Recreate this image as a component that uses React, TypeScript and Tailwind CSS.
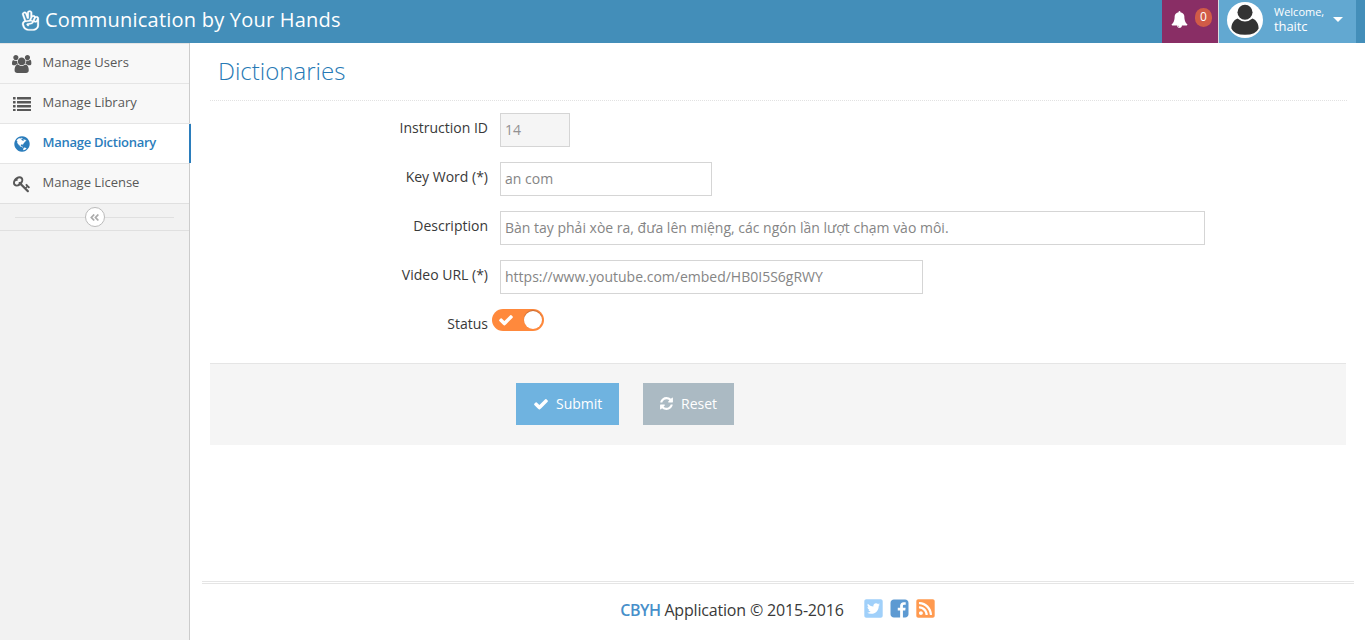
import React from "react";
import { FaTwitterSquare, FaRssSquare, FaAngleDoubleLeft } from "react-icons/fa";
import { LiaHandPeace } from "react-icons/lia";

const paths = {
  users: "M593 896q-162 5-265 128h-134q-82 0-138-40.5t-56-118.5q0-353 124-353 6 0 43.5 21t97.5 42.5 119 21.5q67 0 133-23-5 37-5 66 0 159 90 286zm1071 637q0 120-73 189.5t-194 69.5h-874q-121 0-194-69.5t-73-189.5q0-53 3.5-103.5t14-109 26.5-108.5 43-97.5 62-81 85.5-53.5 111.5-20q10 0 43 21.5t73 48 107 48 135 21.5 135-21.5 107-48 73-48 43-21.5q61 0 111.5 20t85.5 53.5 62 81 43 97.5 26.5 108.5 14 109 3.5 103.5zm-1024-1277q0 106-75 181t-181 75-181-75-75-181 75-181 181-75 181 75 75 181zm704 384q0 159-112.5 271.5t-271.5 112.5-271.5-112.5-112.5-271.5 112.5-271.5 271.5-112.5 271.5 112.5 112.5 271.5zm576 225q0 78-56 118.5t-138 40.5h-134q-103-123-265-128 90-127 90-286 0-29-5-66 66 23 133 23 59 0 119-21.5t97.5-42.5 43.5-21q124 0 124 353zm-128-609q0 106-75 181t-181 75-181-75-75-181 75-181 181-75 181 75 75 181z",
  key: "M832 512q0-80-56-136t-136-56-136 56-56 136q0 42 19 83-41-19-83-19-80 0-136 56t-56 136 56 136 136 56 136-56 56-136q0-42-19-83 41 19 83 19 80 0 136-56t56-136zm851 704q0 17-49 66t-66 49q-9 0-28.5-16t-36.5-33-38.5-40-24.5-26l-96 96 220 220q28 28 28 68 0 42-39 81t-81 39q-40 0-68-28l-671-671q-176 131-365 131-163 0-265.5-102.5t-102.5-265.5q0-160 95-313t248-248 313-95q163 0 265.5 102.5t102.5 265.5q0 189-131 365l355 355 96-96q-3-3-26-24.5t-40-38.5-33-36.5-16-28.5q0-17 49-66t66-49q13 0 23 10 6 6 46 44.5t82 79.5 86.5 86 73 78 28.5 41z",
  refresh: "M1639 1056q0 5-1 7-64 268-268 434.5t-478 166.5q-146 0-282.5-55t-243.5-157l-129 129q-19 19-45 19t-45-19-19-45v-448q0-26 19-45t45-19h448q26 0 45 19t19 45-19 45l-137 137q71 66 161 102t187 36q134 0 250-65t186-179q11-17 53-117 8-23 30-23h192q13 0 22.5 9.5t9.5 22.5zm25-800v448q0 26-19 45t-45 19h-448q-26 0-45-19t-19-45 19-45l138-138q-148-137-349-137-134 0-250 65t-186 179q-11 17-53 117-8 23-30 23h-199q-13 0-22.5-9.5t-9.5-22.5v-7q65-268 270-434.5t480-166.5q146 0 284 55.5t245 156.5l130-129q19-19 45-19t45 19 19 45z",
  check: "M1671 566q0 40-28 68l-724 724-136 136q-28 28-68 28t-68-28l-136-136-362-362q-28-28-28-68t28-68l136-136q28-28 68-28t68 28l294 295 656-657q28-28 68-28t68 28l136 136q28 28 28 68z",
  bell: "M912 1696q0-16-16-16-59 0-101.5-42.5t-42.5-101.5q0-16-16-16t-16 16q0 73 51.5 124.5t124.5 51.5q16 0 16-16zm816-288q0 52-38 90t-90 38h-448q0 106-75 181t-181 75-181-75-75-181h-448q-52 0-90-38t-38-90q50-42 91-88t85-119.5 74.5-158.5 50-206 19.5-260q0-152 117-282.5t307-158.5q-8-19-8-39 0-40 28-68t68-28 68 28 28 68q0 20-8 39 190 28 307 158.5t117 282.5q0 139 19.5 260t50 206 74.5 158.5 85 119.5 91 88z",
  facebook: "M1376 128q119 0 203.5 84.5t84.5 203.5v960q0 119-84.5 203.5t-203.5 84.5h-188v-595h199l30-232h-229v-148q0-56 23.5-84t91.5-28l122-1v-207q-63-9-178-9-136 0-217.5 80t-81.5 226v171h-200v232h200v595h-532q-119 0-203.5-84.5t-84.5-203.5v-960q0-119 84.5-203.5t203.5-84.5h960z",
  globe: "M896 128q209 0 385.5 103t279.5 279.5 103 385.5-103 385.5-279.5 279.5-385.5 103-385.5-103-279.5-279.5-103-385.5 103-385.5 279.5-279.5 385.5-103zm274 521q-2 1-9.5 9.5t-13.5 9.5q2 0 4.5-5t5-11 3.5-7q6-7 22-15 14-6 52-12 34-8 51 11-2-2 9.5-13t14.5-12q3-2 15-4.5t15-7.5l2-22q-12 1-17.5-7t-6.5-21q0 2-6 8 0-7-4.5-8t-11.5 1-9 1q-10-3-15-7.5t-8-16.5-4-15q-2-5-9.5-11t-9.5-10q-1-2-2.5-5.5t-3-6.5-4-5.500-5.500-2.500-7 5-7.500 10-4.500 5q-3-2-6-1.500t-4.500 1-4.500 3-5 3.500q-3 2-8.500 3t-8.500 2q15-5-1-11-10-4-16-3 9-4 7.500-12t-8.500-14h5q-1-4-8.500-8.500t-17.500-8.500-13-6q-8-5-34-9.500t-33-.5q-5 6-4.500 10.500t4 14 3.500 12.500q1 6-5.500 13t-6.500 12q0 7 14 15.500t10 21.500q-3 8-16 16t-16 12q-5 8-1.500 18.500t10.500 16.500q2 2 1.500 4t-3.500 4.500-5.500 4-6.500 3.500l-3 2q-11 5-20.500-6t-13.500-26q-7-25-16-30-23-8-29 1-5-13-41-26-25-9-58-4 6-1 0-15-7-15-19-12 3-6 4-17.500t1-13.500q3-13 12-23 1-1 7-8.500t9.500-13.500.5-6q35 4 50-11 5-5 11.500-17t10.500-17q9-6 14-5.500t14.500 5.500 14.500 5q14 1 15.500-11t-7.500-20q12 1 3-17-4-7-8-9-12-4-27 5-8 4 2 8-1-1-9.500 10.500t-16.500 17.500-16-5q-1-1-5.500-13.500t-9.500-13.500q-8 0-16 15 3-8-11-15t-24-8q19-12-8-27-7-4-20.500-5t-19.500 4q-5 7-5.500 11.500t5 8 10.500 5.500 11.500 4 8.500 3q14 10 8 14-2 1-8.500 3.500t-11.500 4.500-6 4q-3 4 0 14t-2 14q-5-5-9-17.500t-7-16.500q7 9-25 6l-10-1q-4 0-16 2t-20.500 1-13.500-8q-4-8 0-20 1-4 4-2-4-3-11-9.500t-10-8.500q-46 15-94 41 6 1 12-1 5-2 13-6.500t10-5.500q34-14 42-7l5-5q14 16 20 25-7-4-30-1-20 6-22 12 7 12 5 18-4-3-11.500-10t-14.500-11-15-5q-16 0-22 1-146 80-235 222 7 7 12 8 4 1 5 9t2.500 11 11.500-3q9 8 3 19 1-1 44 27 19 17 21 21 3 11-10 18-1-2-9-9t-9-4q-3 5 .5 18.500t10.500 12.500q-7 0-9.500 16t-2.500 35.500-1 23.500l2 1q-3 12 5.500 34.500t21.500 19.500q-13 3 20 43 6 8 8 9 3 2 12 7.500t15 10 10 10.500q4 5 10 22.500t14 23.500q-2 6 9.500 20t10.500 23q-1 0-2.500 1t-2.500 1q3 7 15.500 14t15.500 13q1 3 2 10t3 11 8 2q2-20-24-62-15-25-17-29-3-5-5.500-15.500t-4.500-14.500q2 0 6 1.500t8.500 3.500 7.500 4 2 3q-3 7 2 17.500t12 18.500 17 19 12 13q6 6 14 19.500t0 13.500q9 0 20 10.500t17 19.500q5 8 8 26t5 24q2 7 8.500 13.500t12.500 9.500l16 8 13 7q5 2 18.500 10.500t21.500 11.500q10 4 16 4t14.500-2.500 13.500-3.500q15-2 29 15t21 21q36 19 55 11-2 1 .5 7.500t8 15.500 9 14.500 5.500 8.500q5 6 18 15t18 15q6-4 7-9-3 8 7 20t18 10q14-3 14-32-31 15-49-18 0-1-2.500-5.500t-4-8.500-2.500-8.500 0-7.500 5-3q9 0 10-3.500t-2-12.500-4-13q-1-8-11-20t-12-15q-5 9-16 8t-16-9q0 1-1.500 5.500t-1.500 6.500q-13 0-15-1 1-3 2.500-17.500t3.500-22.500q1-4 5.500-12t7.500-14.500 4-12.500-4.500-9.500-17.500-2.500q-19 1-26 20-1 3-3 10.500t-5 11.500-9 7q-7 3-24 2t-24-5q-13-8-22.500-29t-9.500-37q0-10 2.500-26.500t3-25-5.500-24.500q3-2 9-9.500t10-10.500q2-1 4.500-1.500t4.500 0 4-1.500 3-6q-1-1-4-3-3-3-4-3 7 3 28.500-1.500t27.500 1.500q15 11 22-2 0-1-2.500-9.500t-.5-13.500q5 27 29 9 3 3 15.500 5t17.500 5q3 2 7 5.500t5.500 4.500 5-.5 8.500-6.500q10 14 12 24 11 40 19 44 7 3 11 2t4.500-9.500 0-14-1.500-12.500l-1-8v-18l-1-8q-15-3-18.500-12t1.500-18.500 15-18.500q1-1 8-3.500t15.500-6.500 12.500-8q21-19 15-35 7 0 11-9-1 0-5-3t-7.500-5-4.500-2q9-5 2-16 5-3 7.500-11t7.500-10q9 12 21 2 8-8 1-16 5-7 20.500-10.500t18.500-9.500q7 2 8-2t1-12 3-12q4-5 15-9t13-5l17-11q3-4 0-4 18 2 31-11 10-11-6-20 3-6-3-9.500t-15-5.500q3-1 11.500-.5t10.500-1.500q15-10-7-16-17-5-43 12zm-163 877q206-36 351-189-3-3-12.500-4.500t-12.500-3.500q-18-7-24-8 1-7-2.500-13t-8-9-12.500-8-11-7q-2-2-7-6t-7-5.500-7.500-4.500-8.500-2-10 1l-3 1q-3 1-5.500 2.500t-5.500 3-4 3 0 2.500q-21-17-36-22-5-1-11-5.500t-10.500-7-10-1.500-11.500 7q-5 5-6 15t-2 13q-7-5 0-17.500t2-18.500q-3-6-10.500-4.500t-12 4.500-11.500 8.500-9 6.500-8.500 5.500-8.500 7.500q-3 4-6 12t-5 11q-2-4-11.500-6.500t-9.500-5.500q2 10 4 35t5 38q7 31-12 48-27 25-29 40-4 22 12 26 0 7-8 20.500t-7 21.500q0 6 2 16z",
};

function Glyph({ d, className, box = "0 0 1792 1792" }: { d: string; className: string; box?: string }) {
  return (
    <svg viewBox={box} className={className} fill="currentColor">
      <path d={d} />
    </svg>
  );
}

function ListIcon() {
  return (
    <svg viewBox="0 0 18 14" className="-mt-px h-[14px] w-[18px]" fill="currentColor">
      {[0, 4, 8, 12].map((y) => (
        <g key={y}>
          <rect x="0" y={y} width="2.6" height="2.4" rx="0.3" />
          <rect x="4" y={y} width="14" height="2.4" rx="0.3" />
        </g>
      ))}
    </svg>
  );
}

const items = [
  { label: "Manage Users", icon: <Glyph d={paths.users} box="0 0 1920 1792" className="h-[18px] w-[19.3px]" /> },
  { label: "Manage Library", icon: <ListIcon /> },
  { label: "Manage Dictionary", icon: <Glyph d={paths.globe} className="h-[18px] w-[18px]" />, active: true },
  { label: "Manage License", icon: <Glyph d={paths.key} className="h-[18px] w-[18px]" /> },
];

function Sidebar() {
  return (
    <aside className="w-[190px] shrink-0 border-r border-[#ccc] bg-[#f2f2f2]">
      {items.map(({ label, icon, active }) => (
        <div
          key={label}
          className={
            active
              ? "relative -mr-[2px] flex h-10 items-center border-t border-[#e5e5e5] bg-white text-[13px] font-semibold tracking-[-0.27px] text-[#2b7dbc] shadow-[inset_-2px_0_0_#2b7dbc]"
              : "flex h-10 items-center border-t border-[#e5e5e5] bg-[#f8f8f8] text-[13px] text-[#585858]"
          }
        >
          <span className="ml-[9px] flex w-[26px] justify-center pt-[1px]">{icon}</span>
          <span className="-mt-[2px] ml-[7.5px]">{label}</span>
        </div>
      ))}
      <div className="flex h-[28px] items-center border-y border-[#e0e0e0] px-[15px]">
        <span className="h-px flex-1 bg-[#e0e0e0]" />
        <span className="flex h-5 w-5 items-center justify-center rounded-full border border-[#bbb] bg-white text-[#aaa]">
          <FaAngleDoubleLeft size={11} />
        </span>
        <span className="h-px flex-1 bg-[#e0e0e0]" />
      </div>
    </aside>
  );
}

function Field({ label, value, className }: { label: string; value: string; className: string }) {
  return (
    <div className="mb-[15px] flex h-[34px]">
      <label className="mr-3 w-[278px] pt-[5px] text-right leading-5 text-[#393939]">{label}</label>
      <div className={className}>{value}</div>
    </div>
  );
}

export default function App() {
  return (
    <div className="flex h-[640px] w-[1365px] flex-col overflow-hidden bg-white font-['Open_Sans',sans-serif] text-[14px] text-[#393939]">
      <header className="flex h-[43px] shrink-0 bg-[#438eb9] text-white">
        <div className="flex h-10 items-center pl-[19px] text-[20px]">
          <LiaHandPeace size={23} stroke="currentColor" strokeWidth={0.35} className="scale-x-[1.17]" />
          <span className="ml-[3px] tracking-[0.22px]">Communication by Your Hands</span>
        </div>
        <div className="ml-auto flex w-[57px] border-r border-[#ddd] bg-[#892e65] pl-[9px]">
          <Glyph d={paths.bell} className="mt-[11px] h-[17px] w-[17px]" />
          <span className="mt-2 ml-[7px] flex h-[19px] w-[17px] items-center justify-center rounded-full bg-[#d15b47] pb-px text-[12px]">0</span>
        </div>
        <div className="flex w-[137px] bg-[#62a8d1]">
          <svg viewBox="0 0 36 36" className="mt-[2px] ml-2 h-9 w-9">
            <circle cx="18" cy="18" r="18" fill="#fff" />
            <circle cx="18" cy="10.2" r="7.5" fill="#333" />
            <path fill="#333" d="M10.5 16.5Q18 22.5 25.5 16.5C29.5 18 31.7 22 31.6 26.5Q29 32.8 18 32.8T4.4 26.5C4.3 22 6.5 18 10.5 16.5z" />
          </svg>
          <div className="mt-[5px] ml-[11px] w-[59px] font-medium">
            <div className="text-[11px] leading-[14px]">Welcome,</div>
            <div className="text-[13px] leading-[15px] tracking-[-0.1px]">thaitc</div>
          </div>
          <svg viewBox="0 0 10 5" className="mt-[17px] h-[5px] w-[10px]">
            <path d="M0 0h10L5 5z" fill="#fff" />
          </svg>
        </div>
        <div className="w-[9px]" />
      </header>
      <div className="flex min-h-0 flex-1">
        <Sidebar />
        <main className="flex min-w-0 flex-1 flex-col">
          <h1 className="mr-[18px] ml-5 h-[58px] border-b border-dotted border-[#e2e2e2] pt-[10px] pl-2 text-[24px] leading-9 font-light text-[#2679b5]">Dictionaries</h1>
          <div className="ml-5 pt-3">
            <Field label="Instruction ID" value="14" className="w-[70px] border border-[#d5d5d5] bg-[#f5f5f5] pl-1 leading-8 text-[#939192]" />
            <Field label="Key Word (*)" value="an com" className="w-[212px] border border-[#d5d5d5] pl-1 leading-8 text-[#858585]" />
            <Field label="Description" value="Bàn tay phải xòe ra, đưa lên miệng, các ngón lần lượt chạm vào môi." className="w-[705px] border border-[#d5d5d5] pl-1 leading-8 text-[#858585]" />
            <Field label="Video URL (*)" value="https://www.youtube.com/embed/HB0I5S6gRWY" className="w-[423px] border border-[#d5d5d5] pl-1 leading-8 text-[#858585]" />
            <div className="flex h-[54px]">
              <label className="mr-1 w-[278px] pt-[5px] text-right leading-5">Status</label>
              <div className="flex h-[22px] w-[52px] items-center justify-between rounded-full bg-[#ff893c] px-[2px] text-white">
                <Glyph d={paths.check} className="mb-px ml-1 h-4 w-4" />
                <span className="h-[18px] w-[18px] rounded-full bg-white shadow-[0_-1px_1px_#c66b32]" />
              </div>
            </div>
          </div>
          <div className="mr-[19px] ml-5 flex h-[82px] gap-6 border-t border-[#e5e5e5] bg-[#f5f5f5] pt-[19px] pl-[306px] text-white [text-shadow:0_-1px_0_rgba(0,0,0,0.25)]">
            <button className="flex h-[42px] w-[103px] items-center bg-[#6fb3e0] pb-px pl-[17px]">
              <Glyph d={paths.check} className="mr-[7px] h-4 w-4" />Submit
            </button>
            <button className="flex h-[42px] w-[91px] items-center bg-[#abbac3] pb-px pl-4">
              <Glyph d={paths.refresh} className="mr-[7px] h-[15px] w-[15px]" />Reset
            </button>
          </div>
          <footer className="mt-auto mr-[11px] ml-3 flex h-[59px] items-center justify-center border-t-[3px] border-double border-[#e5e5e5] pb-1 text-[16px]">
            <span className="tracking-[-0.18px]"><b className="font-semibold tracking-[-0.5px] text-[#478fca]">CBYH</b> Application © 2015-2016</span>
            <span className="mb-[3px] ml-[19px] flex gap-[5px]">
              <FaTwitterSquare size={21} className="text-[#a0d0fa]" />
              <Glyph d={paths.facebook} className="h-[21px] w-[21px] text-[#5d9ad2]" />
              <FaRssSquare size={21} className="text-[#ff9a50]" />
            </span>
          </footer>
        </main>
      </div>
    </div>
  );
}
